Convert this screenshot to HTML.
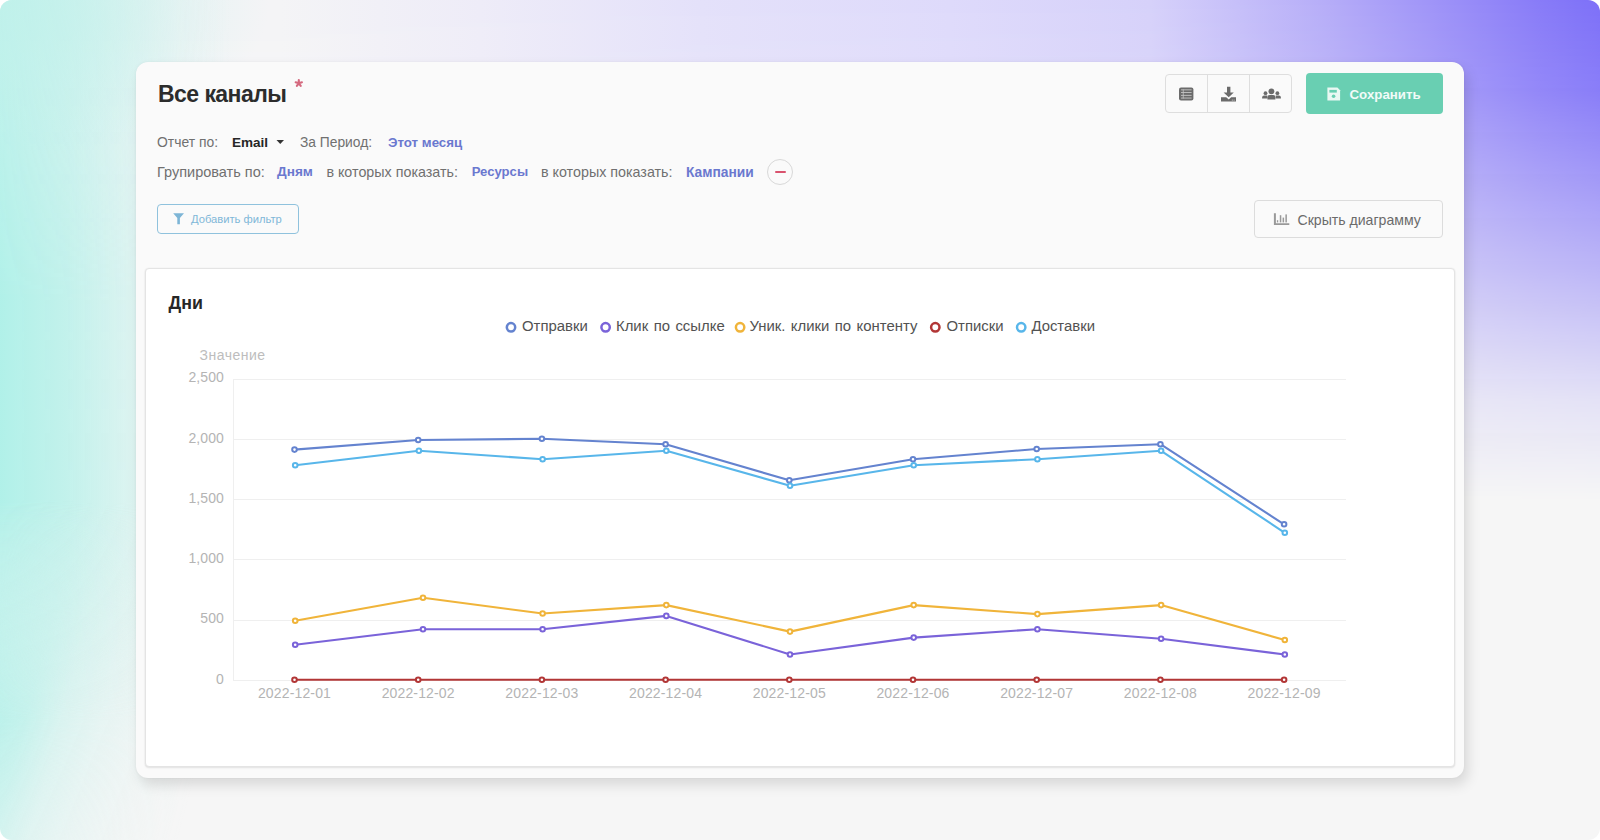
<!DOCTYPE html>
<html><head><meta charset="utf-8">
<style>
html,body{margin:0;padding:0;width:1600px;height:840px;overflow:hidden;background:#fff;}
body{font-family:"Liberation Sans",sans-serif;position:relative;}
#bg{position:absolute;left:0;top:0;width:1600px;height:840px;border-radius:12px;overflow:hidden;background:#f6f6f6;}
#bg .l{position:absolute;}
.card{position:absolute;left:136px;top:62.2px;width:1327.5px;height:715.5px;background:#fafafa;border-radius:12px;
  box-shadow:4px 7px 13px rgba(0,0,0,0.12), 0 0 3px rgba(0,0,0,0.05);}
.t{position:absolute;white-space:nowrap;line-height:1;}
.chart{position:absolute;left:145px;top:267.9px;width:1307.5px;height:497px;background:#fff;border:1px solid #e4e4e4;border-radius:4px;
  box-shadow:0 1px 2px rgba(0,0,0,0.09), 0 0 2px rgba(0,0,0,0.05);}
svg.ov{position:absolute;left:0;top:0;}
.yl{font-size:14px;fill:#b4b4b4;letter-spacing:0.1px;}
.yn{font-size:14px;fill:#bdbdbd;letter-spacing:0.5px;}
.xl{font-size:14px;fill:#b4b4b4;letter-spacing:0.15px;}
.lg{font-size:14.9px;fill:#525252;word-spacing:1.3px;}
.btng{position:absolute;left:1165px;top:74px;width:125px;height:37px;border:1px solid #dedede;border-radius:4px;background:#fafafa;}
.btng .d{position:absolute;top:0;width:1px;height:37px;background:#dedede;}
.save{position:absolute;left:1305.5px;top:73.3px;width:137.7px;height:41px;background:#69cfb2;border-radius:4px;}
.filter{position:absolute;left:156.5px;top:203.5px;width:140px;height:28px;border:1.5px solid #8fc2dd;border-radius:4px;}
.hide{position:absolute;left:1253.7px;top:200.2px;width:187.5px;height:35.8px;border:1px solid #dcdcdc;border-radius:4px;}
.minus{position:absolute;left:767px;top:159px;width:24px;height:24px;border:1px solid #d8d8d8;border-radius:50%;background:#fafafa;}
.minus:after{content:"";position:absolute;left:6.5px;top:11px;width:11px;height:2.4px;background:#d9536e;border-radius:1px;}
</style></head><body>
<div id="bg">
  <div class="l" style="left:0;top:0;width:1600px;height:840px;background:linear-gradient(90deg,#f4f4f6 0px,#f4f4f6 280px,#eeecf8 480px,#e4e1fa 700px,#dedafb 950px,#d6d1fa 1150px,#b5acf8 1330px,#887bf8 1540px,#7d70f8 1600px);-webkit-mask-image:linear-gradient(180deg,#000 0px,rgba(0,0,0,.9) 90px,rgba(0,0,0,.5) 260px,rgba(0,0,0,.15) 400px,rgba(0,0,0,0) 500px);"></div>
  <div class="l" style="left:0;top:0;width:1600px;height:840px;background:linear-gradient(90deg,rgba(176,240,232,1) 0px,rgba(176,240,232,.72) 70px,rgba(176,240,232,.38) 130px,rgba(176,240,232,.12) 180px,rgba(176,240,232,0) 230px);-webkit-mask-image:linear-gradient(180deg,rgba(0,0,0,.72) 0px,#000 300px,#000 500px,rgba(0,0,0,0) 720px);"></div>
  <div class="l" style="left:0;top:0;width:1600px;height:840px;background:linear-gradient(105deg,rgba(176,240,232,1) 0px,rgba(176,240,232,1) 150px,rgba(176,240,232,.7) 210px,rgba(176,240,232,.4) 245px,rgba(176,240,232,.22) 285px,rgba(176,240,232,.08) 335px,rgba(176,240,232,0) 390px);-webkit-mask-image:linear-gradient(180deg,rgba(0,0,0,0) 500px,#000 720px,rgba(0,0,0,.75) 840px);"></div>
  <div class="l" style="left:0;top:0;width:1600px;height:840px;background:radial-gradient(ellipse 270px 160px at 0px 0px,rgba(190,241,234,.7) 0%,rgba(190,241,234,0) 100%);"></div>
</div>
<div class="card"></div>
<div class="chart"></div>

<div class="t" style="left:158px;top:82.5px;font-size:23px;font-weight:bold;color:#2c2c2c;letter-spacing:-0.55px;">Все каналы</div>
<svg class="ov" width="1600" height="840" style="z-index:0">
  <path d="M298.80,83.30 L298.80,80.00 M298.80,83.30 L301.94,82.28 M298.80,83.30 L300.74,85.97 M298.80,83.30 L296.86,85.97 M298.80,83.30 L295.66,82.28" stroke="#d4687e" stroke-width="2.1" stroke-linecap="round" fill="none"/>
</svg>

<div class="t" style="left:157px;top:136.2px;font-size:13.9px;color:#707070;">Отчет по:</div>
<div class="t" style="left:232px;top:136.2px;font-size:13.5px;font-weight:bold;color:#262626;">Email</div>
<svg class="ov" width="1600" height="840"><path d="M276.5,140 h7.5 l-3.75,4 z" fill="#333"/></svg>
<div class="t" style="left:300px;top:136.2px;font-size:13.8px;color:#707070;">За Период:</div>
<div class="t" style="left:388px;top:136.4px;font-size:13.3px;font-weight:bold;color:#6a78cf;">Этот месяц</div>

<div class="t" style="left:157px;top:165.3px;font-size:14.5px;color:#707070;">Групировать по:</div>
<div class="t" style="left:277px;top:165.3px;font-size:13.6px;font-weight:bold;color:#6a78cf;">Дням</div>
<div class="t" style="left:326.4px;top:165.3px;font-size:14.3px;color:#707070;">в которых показать:</div>
<div class="t" style="left:471.7px;top:165.3px;font-size:13.1px;font-weight:bold;color:#6a78cf;">Ресурсы</div>
<div class="t" style="left:541px;top:165.3px;font-size:14.3px;color:#707070;">в которых показать:</div>
<div class="t" style="left:686px;top:166.2px;font-size:13.8px;font-weight:bold;color:#6a78cf;">Кампании</div>
<div class="minus"></div>

<div class="filter"></div>
<svg class="ov" width="1600" height="840"><path d="M173.2,213.3 h10.8 l-4.1,4.6 v6.4 h-2.6 v-6.4 z" fill="#7db5d6"/></svg>
<div class="t" style="left:191px;top:213.9px;font-size:11.2px;color:#7fb7d8;">Добавить фильтр</div>

<div class="btng"><div class="d" style="left:41px"></div><div class="d" style="left:83px"></div></div>
<svg class="ov" width="1600" height="840">
  <rect x="1179" y="87.5" width="14.4" height="13" rx="2" fill="#6b6b6b"/>
  <rect x="1181" y="89.4" width="10.6" height="0.9" fill="#c4c4c4"/>
  <rect x="1181" y="92.1" width="10.6" height="0.9" fill="#c4c4c4"/>
  <rect x="1181" y="94.9" width="10.6" height="0.9" fill="#c4c4c4"/>
  <rect x="1181" y="97.6" width="10.6" height="0.9" fill="#c4c4c4"/>
  <rect x="1182.8" y="89.4" width="0.8" height="9.1" fill="#c4c4c4"/>
  <path d="M1227,86.8 h3.4 v5.6 h3.4 l-5.1,4.9 l-5.1,-4.9 h3.4 z" fill="#6b6b6b"/>
  <path d="M1221,97.2 h5.2 l2.5,2.2 l2.5,-2.2 h4.8 v4.3 h-15 z" fill="#6b6b6b"/>
  <rect x="1231.8" y="99.6" width="1" height="1" fill="#cfcfcf"/>
  <rect x="1233.6" y="99.6" width="1" height="1" fill="#cfcfcf"/>
  <circle cx="1271.4" cy="91.3" r="2.9" fill="#6b6b6b"/>
  <circle cx="1265.5" cy="93.2" r="1.9" fill="#6b6b6b"/>
  <circle cx="1277.4" cy="93.2" r="1.9" fill="#6b6b6b"/>
  <path d="M1267.4,99.6 v-2.4 q0,-2.2 2.2,-2.2 h3.6 q2.2,0 2.2,2.2 v2.4 z" fill="#6b6b6b"/>
  <path d="M1262.1,98.6 v-1.2 q0,-2 2,-2 h3.2 v3.2 z" fill="#6b6b6b"/>
  <path d="M1280.9,98.6 v-1.2 q0,-2 -2,-2 h-3.2 v3.2 z" fill="#6b6b6b"/>
</svg>

<div class="save"></div>
<svg class="ov" width="1600" height="840">
  <path d="M1327.4,87.6 h10 l2.7,2.7 v10.3 h-12.7 z" fill="#eaf8f3"/>
  <rect x="1329.4" y="89.9" width="7.4" height="2.7" fill="#69cfb2"/>
  <circle cx="1333.6" cy="96.2" r="1.8" fill="#69cfb2"/>
</svg>
<div class="t" style="left:1349.5px;top:87.8px;font-size:13.3px;font-weight:bold;color:#f2fbf8;">Сохранить</div>

<div class="hide"></div>
<svg class="ov" width="1600" height="840">
  <path d="M1273.9,213.2 h2 v10 h13.4 v1.7 h-15.4 z" fill="#999"/>
  <rect x="1276.9" y="220.2" width="1.3" height="2.2" fill="#999"/>
  <rect x="1279.8" y="215.2" width="1.5" height="7.2" fill="#999"/>
  <rect x="1282.6" y="217.6" width="1.5" height="4.8" fill="#999"/>
  <rect x="1285.4" y="214.4" width="1.5" height="8" fill="#999"/>
</svg>
<div class="t" style="left:1297.5px;top:213.1px;font-size:14.1px;color:#6b6b6b;">Скрыть диаграмму</div>

<div class="t" style="left:168.6px;top:295.2px;font-size:17.8px;font-weight:bold;color:#262626;">Дни</div>

<svg class="ov" width="1600" height="840">
<line x1="233.5" y1="680.5" x2="1346" y2="680.5" stroke="#efefef" stroke-width="1"/>
<text x="224" y="683.6" text-anchor="end" class="yl">0</text>
<line x1="233.5" y1="620.5" x2="1346" y2="620.5" stroke="#efefef" stroke-width="1"/>
<text x="224" y="623.3" text-anchor="end" class="yl">500</text>
<line x1="233.5" y1="559.5" x2="1346" y2="559.5" stroke="#efefef" stroke-width="1"/>
<text x="224" y="563.1" text-anchor="end" class="yl">1,000</text>
<line x1="233.5" y1="499.5" x2="1346" y2="499.5" stroke="#efefef" stroke-width="1"/>
<text x="224" y="502.8" text-anchor="end" class="yl">1,500</text>
<line x1="233.5" y1="439.5" x2="1346" y2="439.5" stroke="#efefef" stroke-width="1"/>
<text x="224" y="442.6" text-anchor="end" class="yl">2,000</text>
<line x1="233.5" y1="379.5" x2="1346" y2="379.5" stroke="#efefef" stroke-width="1"/>
<text x="224" y="382.3" text-anchor="end" class="yl">2,500</text>
<line x1="233.5" y1="379" x2="233.5" y2="681" stroke="#efefef" stroke-width="1"/>
<text x="232.6" y="360" text-anchor="middle" class="yn">Значение</text>
<text x="294.5" y="698" text-anchor="middle" class="xl">2022-12-01</text>
<text x="418.2" y="698" text-anchor="middle" class="xl">2022-12-02</text>
<text x="541.9" y="698" text-anchor="middle" class="xl">2022-12-03</text>
<text x="665.6" y="698" text-anchor="middle" class="xl">2022-12-04</text>
<text x="789.3" y="698" text-anchor="middle" class="xl">2022-12-05</text>
<text x="913.0" y="698" text-anchor="middle" class="xl">2022-12-06</text>
<text x="1036.7" y="698" text-anchor="middle" class="xl">2022-12-07</text>
<text x="1160.4" y="698" text-anchor="middle" class="xl">2022-12-08</text>
<text x="1284.1" y="698" text-anchor="middle" class="xl">2022-12-09</text>
<polyline points="294.5,449.6 418.2,440.0 541.9,438.8 665.6,444.2 789.3,480.3 913.0,459.2 1036.7,449.0 1160.4,444.2 1284.1,524.3" fill="none" stroke="#6483cf" stroke-width="2.1" stroke-linejoin="round"/>
<circle cx="294.5" cy="449.6" r="2.3" fill="#fff" stroke="#6483cf" stroke-width="2"/>
<circle cx="418.2" cy="440.0" r="2.3" fill="#fff" stroke="#6483cf" stroke-width="2"/>
<circle cx="541.9" cy="438.8" r="2.3" fill="#fff" stroke="#6483cf" stroke-width="2"/>
<circle cx="665.6" cy="444.2" r="2.3" fill="#fff" stroke="#6483cf" stroke-width="2"/>
<circle cx="789.3" cy="480.3" r="2.3" fill="#fff" stroke="#6483cf" stroke-width="2"/>
<circle cx="913.0" cy="459.2" r="2.3" fill="#fff" stroke="#6483cf" stroke-width="2"/>
<circle cx="1036.7" cy="449.0" r="2.3" fill="#fff" stroke="#6483cf" stroke-width="2"/>
<circle cx="1160.4" cy="444.2" r="2.3" fill="#fff" stroke="#6483cf" stroke-width="2"/>
<circle cx="1284.1" cy="524.3" r="2.3" fill="#fff" stroke="#6483cf" stroke-width="2"/>
<polyline points="295.2,644.8 423.0,629.2 542.6,629.2 666.3,615.9 790.0,654.5 913.7,637.6 1037.4,629.2 1161.1,638.8 1284.8,654.5" fill="none" stroke="#7a63d9" stroke-width="2.1" stroke-linejoin="round"/>
<circle cx="295.2" cy="644.8" r="2.3" fill="#fff" stroke="#7a63d9" stroke-width="2"/>
<circle cx="423.0" cy="629.2" r="2.3" fill="#fff" stroke="#7a63d9" stroke-width="2"/>
<circle cx="542.6" cy="629.2" r="2.3" fill="#fff" stroke="#7a63d9" stroke-width="2"/>
<circle cx="666.3" cy="615.9" r="2.3" fill="#fff" stroke="#7a63d9" stroke-width="2"/>
<circle cx="790.0" cy="654.5" r="2.3" fill="#fff" stroke="#7a63d9" stroke-width="2"/>
<circle cx="913.7" cy="637.6" r="2.3" fill="#fff" stroke="#7a63d9" stroke-width="2"/>
<circle cx="1037.4" cy="629.2" r="2.3" fill="#fff" stroke="#7a63d9" stroke-width="2"/>
<circle cx="1161.1" cy="638.8" r="2.3" fill="#fff" stroke="#7a63d9" stroke-width="2"/>
<circle cx="1284.8" cy="654.5" r="2.3" fill="#fff" stroke="#7a63d9" stroke-width="2"/>
<polyline points="295.2,620.7 423.0,597.8 542.6,613.5 666.3,605.1 790.0,631.6 913.7,605.1 1037.4,614.1 1161.1,605.1 1284.8,640.0" fill="none" stroke="#f0b43a" stroke-width="2.1" stroke-linejoin="round"/>
<circle cx="295.2" cy="620.7" r="2.3" fill="#fff" stroke="#f0b43a" stroke-width="2"/>
<circle cx="423.0" cy="597.8" r="2.3" fill="#fff" stroke="#f0b43a" stroke-width="2"/>
<circle cx="542.6" cy="613.5" r="2.3" fill="#fff" stroke="#f0b43a" stroke-width="2"/>
<circle cx="666.3" cy="605.1" r="2.3" fill="#fff" stroke="#f0b43a" stroke-width="2"/>
<circle cx="790.0" cy="631.6" r="2.3" fill="#fff" stroke="#f0b43a" stroke-width="2"/>
<circle cx="913.7" cy="605.1" r="2.3" fill="#fff" stroke="#f0b43a" stroke-width="2"/>
<circle cx="1037.4" cy="614.1" r="2.3" fill="#fff" stroke="#f0b43a" stroke-width="2"/>
<circle cx="1161.1" cy="605.1" r="2.3" fill="#fff" stroke="#f0b43a" stroke-width="2"/>
<circle cx="1284.8" cy="640.0" r="2.3" fill="#fff" stroke="#f0b43a" stroke-width="2"/>
<polyline points="294.5,679.7 418.2,679.7 541.9,679.7 665.6,679.7 789.3,679.7 913.0,679.7 1036.7,679.7 1160.4,679.7 1284.1,679.7" fill="none" stroke="#b23636" stroke-width="2.1" stroke-linejoin="round"/>
<circle cx="294.5" cy="679.7" r="2.3" fill="#fff" stroke="#b23636" stroke-width="2"/>
<circle cx="418.2" cy="679.7" r="2.3" fill="#fff" stroke="#b23636" stroke-width="2"/>
<circle cx="541.9" cy="679.7" r="2.3" fill="#fff" stroke="#b23636" stroke-width="2"/>
<circle cx="665.6" cy="679.7" r="2.3" fill="#fff" stroke="#b23636" stroke-width="2"/>
<circle cx="789.3" cy="679.7" r="2.3" fill="#fff" stroke="#b23636" stroke-width="2"/>
<circle cx="913.0" cy="679.7" r="2.3" fill="#fff" stroke="#b23636" stroke-width="2"/>
<circle cx="1036.7" cy="679.7" r="2.3" fill="#fff" stroke="#b23636" stroke-width="2"/>
<circle cx="1160.4" cy="679.7" r="2.3" fill="#fff" stroke="#b23636" stroke-width="2"/>
<circle cx="1284.1" cy="679.7" r="2.3" fill="#fff" stroke="#b23636" stroke-width="2"/>
<polyline points="295.2,465.3 418.9,450.8 542.6,459.2 666.3,450.8 790.0,485.8 913.7,465.3 1037.4,459.2 1161.1,450.8 1284.8,532.8" fill="none" stroke="#58b6ea" stroke-width="2.1" stroke-linejoin="round"/>
<circle cx="295.2" cy="465.3" r="2.3" fill="#fff" stroke="#58b6ea" stroke-width="2"/>
<circle cx="418.9" cy="450.8" r="2.3" fill="#fff" stroke="#58b6ea" stroke-width="2"/>
<circle cx="542.6" cy="459.2" r="2.3" fill="#fff" stroke="#58b6ea" stroke-width="2"/>
<circle cx="666.3" cy="450.8" r="2.3" fill="#fff" stroke="#58b6ea" stroke-width="2"/>
<circle cx="790.0" cy="485.8" r="2.3" fill="#fff" stroke="#58b6ea" stroke-width="2"/>
<circle cx="913.7" cy="465.3" r="2.3" fill="#fff" stroke="#58b6ea" stroke-width="2"/>
<circle cx="1037.4" cy="459.2" r="2.3" fill="#fff" stroke="#58b6ea" stroke-width="2"/>
<circle cx="1161.1" cy="450.8" r="2.3" fill="#fff" stroke="#58b6ea" stroke-width="2"/>
<circle cx="1284.8" cy="532.8" r="2.3" fill="#fff" stroke="#58b6ea" stroke-width="2"/>
<circle cx="511" cy="327.3" r="4.2" fill="none" stroke="#6483cf" stroke-width="2.5"/>
<text x="522" y="331" class="lg">Отправки</text>
<circle cx="605.6" cy="327.3" r="4.2" fill="none" stroke="#7a63d9" stroke-width="2.5"/>
<text x="616" y="331" class="lg">Клик по ссылке</text>
<circle cx="740.1" cy="327.3" r="4.2" fill="none" stroke="#f0b43a" stroke-width="2.5"/>
<text x="749.4" y="331" class="lg">Уник. клики по контенту</text>
<circle cx="935.3" cy="327.3" r="4.2" fill="none" stroke="#b23636" stroke-width="2.5"/>
<text x="946.5" y="331" class="lg">Отписки</text>
<circle cx="1021.2" cy="327.3" r="4.2" fill="none" stroke="#58b6ea" stroke-width="2.5"/>
<text x="1031.4" y="331" class="lg">Доставки</text>
</svg>
</body></html>
